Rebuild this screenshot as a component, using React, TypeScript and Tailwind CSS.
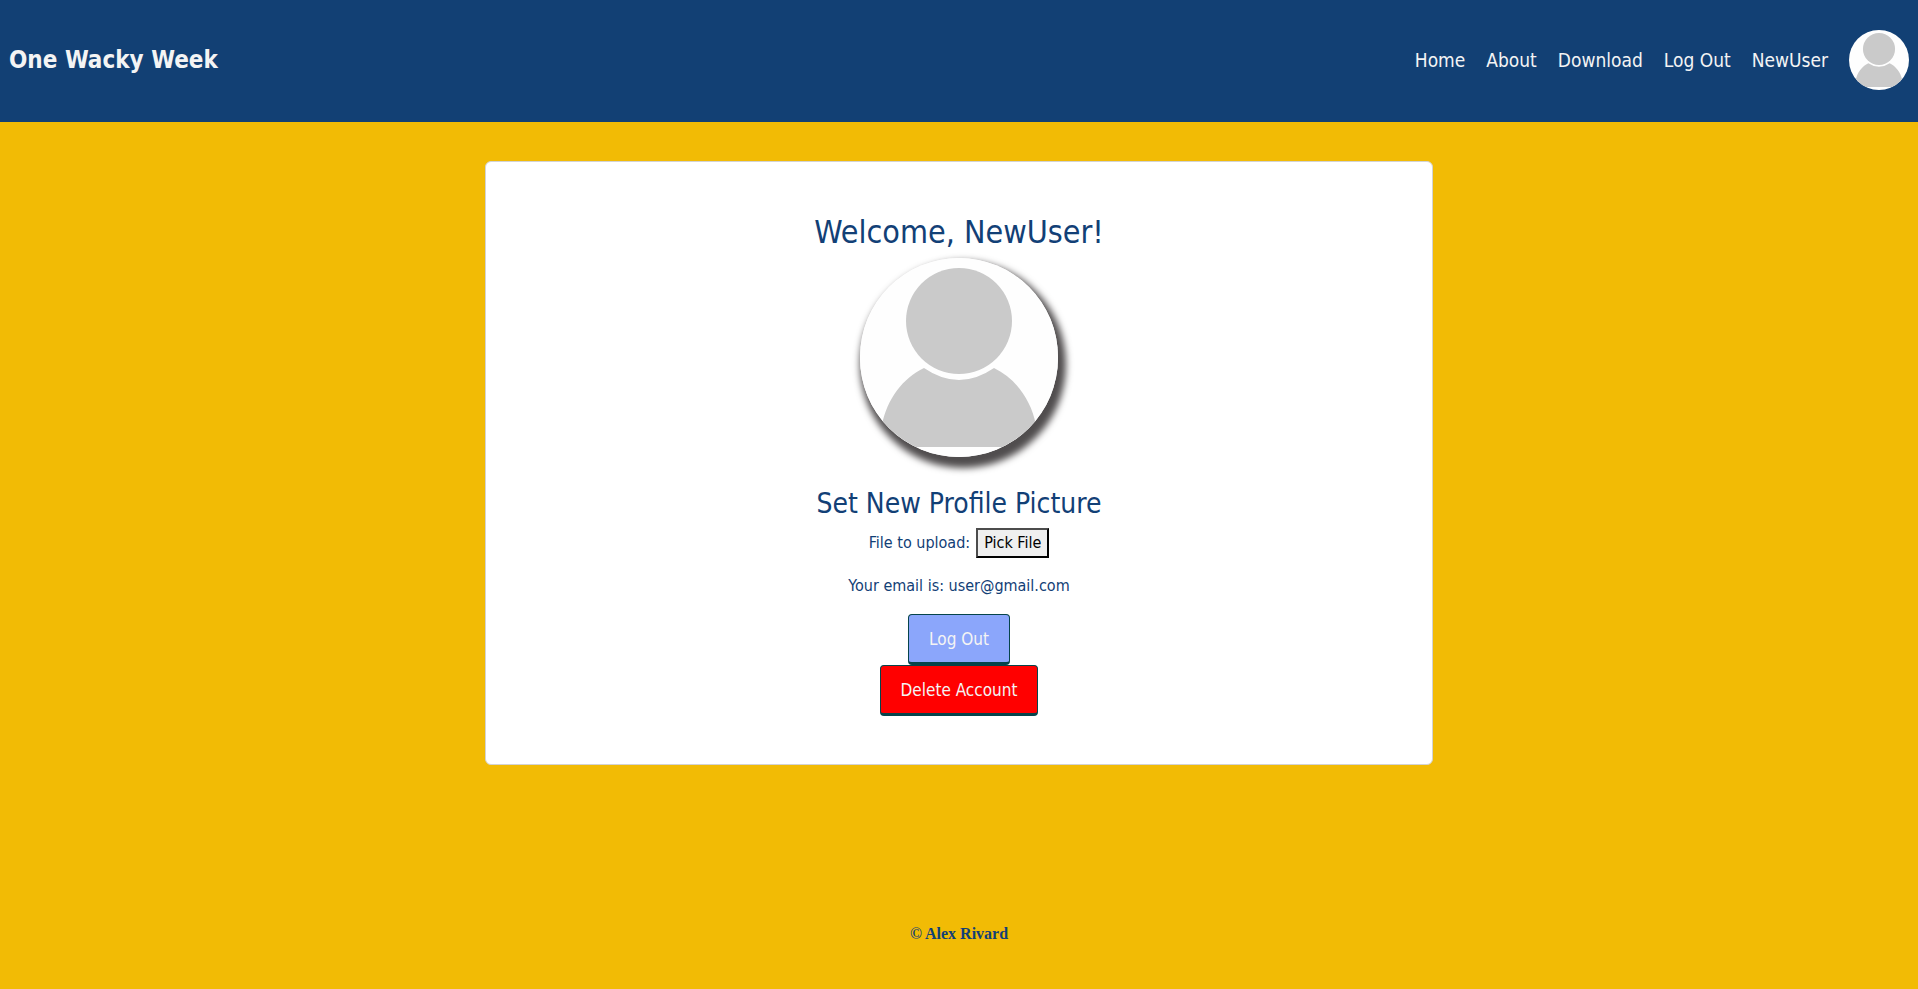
import React from "react";

function Avatar({ className }: { className: string }) {
  return (
    <svg viewBox="0 0 198 199" preserveAspectRatio="none" role="img" aria-label="Profile picture" className={className}>
      <rect width="198" height="199" fill="#fefefe" />
      <path d="M22 189 V167 C27 141 43 120 64 110 Q99 134 134 110 C155 120 171 141 176 167 V189 Z" fill="#cacaca" />
      <circle cx="99" cy="63" r="53" fill="#cacaca" />
    </svg>
  );
}

const links = ["Home", "About", "Download", "Log Out", "NewUser"];

export default function App() {
  return (
    <div className="flex min-h-screen flex-col bg-[#f2bb05] font-['DejaVu_Sans_Condensed','DejaVu_Sans',sans-serif] text-base text-[#124076]">
      <header className="flex items-center justify-between bg-[#124074] px-[9px] pt-[30px] pb-8 text-[#f4f4f4]">
        <a href="#home" className="text-2xl font-bold">One Wacky Week</a>
        <nav className="flex items-center gap-[21px] text-[19px]">
          {links.map((name) => (
            <a key={name} href={"#" + name.toLowerCase().replace(" ", "-")}>{name}</a>
          ))}
          <Avatar className="size-[60px] rounded-full" />
        </nav>
      </header>

      <main className="flex grow flex-col items-center px-4 pt-[39px]">
        <section className="flex w-full max-w-[948px] flex-col items-center rounded-md border border-[#d3d3d3] bg-white px-6 pt-[50px] pb-12">
          <h1 className="text-[32px] leading-10">Welcome, NewUser!</h1>
          <Avatar className="mt-1.5 h-[199px] w-[198px] rounded-full shadow-[4px_7px_7px_4px_#504d4e]" />
          <h2 className="mt-[29px] text-[28px] leading-9">Set New Profile Picture</h2>
          <div className="mt-1.5 flex items-center gap-1.5">
            <span id="upload-label">File to upload:</span>
            <button type="button" aria-describedby="upload-label" className="border-2 border-t-[#4c4c4c] border-r-black border-b-black border-l-[#4c4c4c] bg-[#efefef] px-1.5 py-px text-black">Pick File</button>
          </div>
          <p className="mt-4">Your email is: user@gmail.com</p>
          <button type="button" className="mt-4 rounded border border-b-[3px] border-[#06444b] bg-[#8ba6fb] px-5 pt-2.5 pb-[9px] text-[17px] leading-7 text-[#f4f4f4]">Log Out</button>
          <button type="button" className="rounded border border-b-[3px] border-[#06444b] bg-[#ff0000] px-5 pt-2.5 pb-[9px] text-[17px] leading-7 text-[#f4f4f4]">Delete Account</button>
        </section>
      </main>

      <footer className="pb-[43px] text-center font-['Liberation_Serif',serif] font-bold">© Alex Rivard</footer>
    </div>
  );
}
